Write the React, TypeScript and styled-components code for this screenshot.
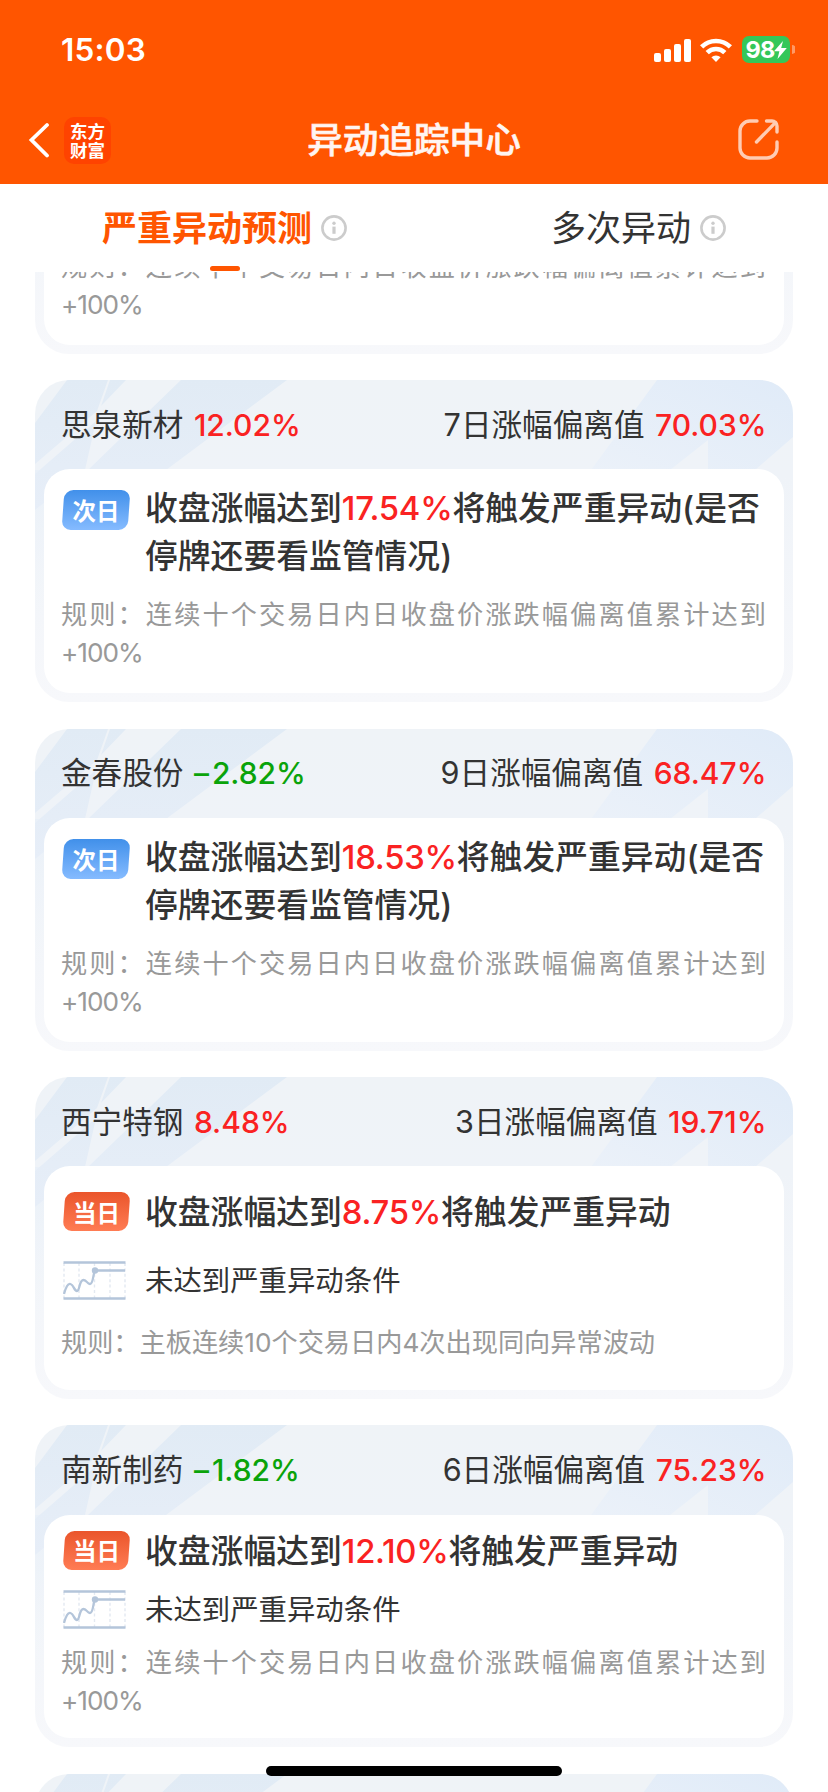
import React from "react";
import styled, { createGlobalStyle } from "styled-components";

const GlobalStyle = createGlobalStyle`
  * { box-sizing: border-box; }
  body { margin: 0; background: #fff; }
`;

const Page = styled.div`
  position: relative;
  width: 828px;
  height: 1792px;
  overflow: hidden;
  display: flex;
  flex-direction: column;
  background: #fff;
  color: #333;
  font-family: Inter, "Noto Sans CJK SC", sans-serif;
`;

const Header = styled.header`
  flex: none;
  height: 184px;
  background: #ff5500;
  color: #fff;
`;

const StatusBar = styled.div`
  height: 96px;
  padding: 3px 33.5px 0 61px;
  display: flex;
  align-items: center;
  justify-content: space-between;
`;

const Clock = styled.span`
  font-size: 31.5px;
  font-weight: 600;
  letter-spacing: 0.2px;
`;

const StatusIcons = styled.div`
  display: flex;
  align-items: center;
  gap: 9.5px;
`;

const Battery = styled.div`
  display: flex;
  align-items: center;
  gap: 2px;
`;

const BatteryBody = styled.div`
  width: 48px;
  height: 27px;
  padding-left: 4px;
  border-radius: 7px;
  background: #34c759;
  display: flex;
  align-items: center;
  font-size: 23.5px;
  font-weight: 700;
  letter-spacing: -0.8px;
`;

const NavBar = styled.div`
  height: 88px;
  padding: 0 28px;
  display: grid;
  grid-template-columns: 1fr auto 1fr;
  align-items: center;
`;

const NavLeft = styled.div`
  display: flex;
  align-items: center;
  gap: 14px;
`;

const Logo = styled.div`
  width: 47px;
  height: 47px;
  border-radius: 10px;
  background: #ff4300;
  display: flex;
  flex-direction: column;
  align-items: center;
  justify-content: center;
  font: 700 17.5px/19.5px "Noto Sans CJK SC", sans-serif;
`;

const NavTitle = styled.h1`
  margin: 2px 0 0;
  font-size: 35.6px;
  line-height: 48px;
  font-weight: 500;
  -webkit-text-stroke: 0.6px #fff5f2;
  color: #fff5f2;
`;

const NavRight = styled.div`
  padding-right: 20px;
  display: flex;
  justify-content: flex-end;
`;

const Tabs = styled.nav`
  flex: none;
  height: 88px;
  display: grid;
  grid-template-columns: 1fr 1fr;
  background: #fff;
`;

const Tab = styled.div<{ $active?: boolean }>`
  position: relative;
  padding-left: 35px;
  display: flex;
  align-items: center;
  justify-content: center;
  gap: 9px;
  font-size: 35px;
  font-weight: ${(p) => (p.$active ? 700 : 400)};
  color: ${(p) => (p.$active ? "#ff5500" : "#333")};
`;

const TabLabel = styled.span`
  line-height: 48px;
`;

const TabLine = styled.i`
  position: absolute;
  left: 209.5px;
  bottom: 1px;
  width: 30px;
  height: 5px;
  border-radius: 3px;
  background: #ff5500;
`;

const List = styled.main`
  flex: 1;
  min-height: 0;
  overflow: hidden;
  padding: 0 35px;
`;

const Track = styled.div`
  margin-top: -240.2px;
  display: flex;
  flex-direction: column;
  gap: 26.4px;
`;

const CardBox = styled.section`
  position: relative;
  flex: none;
  height: 322px;
  padding: 0 9px 9px;
  border-radius: 34px;
  overflow: hidden;
  display: flex;
  flex-direction: column;
`;

const CardArt = styled.svg`
  position: absolute;
  inset: 0;
`;

const CardHead = styled.div`
  position: relative;
  flex: none;
  height: 89.2px;
  padding: 0 17.5px 0 17px;
  display: flex;
  align-items: center;
  justify-content: space-between;
  font-size: 30.6px;
  line-height: 44px;
`;

const HeadGroup = styled.div`
  display: flex;
  align-items: center;
  gap: 10.5px;
`;

const Percent = styled.span<{ $down?: boolean }>`
  display: flex;
  gap: 3px;
  font-weight: 500;
  font-size: 30px;
  letter-spacing: 0;
  color: ${(p) => (p.$down ? "#0aa30a" : "#fa2222")};
`;

const Body = styled.div<{ $pad: number; $gap: number }>`
  position: relative;
  flex: 1;
  padding: ${(p) => p.$pad}px 17px 0;
  border-radius: 26px;
  background: #fff;
  display: flex;
  flex-direction: column;
  gap: ${(p) => p.$gap}px;
`;

const Row = styled.div`
  display: grid;
  grid-template-columns: 84px 1fr;
  align-items: start;
`;

const HeadlineSpace = styled.div`
  height: 96px;
`;

const BadgeBox = styled.div<{ $today: boolean }>`
  position: relative;
  width: ${(p) => (p.$today ? 65 : 66)}px;
  height: ${(p) => (p.$today ? 39 : 40)}px;
  margin: ${(p) => (p.$today ? "4px 0 0 3px" : "6px 0 0 2px")};
  display: flex;
  align-items: center;
  justify-content: center;
  font: 700 23.5px/36px "Noto Sans CJK SC", sans-serif;
  color: #fff;
  &::before {
    content: "";
    position: absolute;
    inset: 0;
    border-radius: 9px;
    transform: skewX(-4deg);
    background: ${(p) =>
      p.$today
        ? "linear-gradient(#ea552b, #ff7c54)"
        : "linear-gradient(#4190ea, #85bbff)"};
  }
  span { position: relative; }
`;

const Headline = styled.div`
  font-size: 32.8px;
  line-height: 48px;
  font-weight: 500;
  white-space: nowrap;
`;

const Value = styled.span`
  color: #fa2222;
  letter-spacing: -0.25px;
`;

const Condition = styled.div`
  margin-top: 1px;
  font-size: 28.4px;
  line-height: 40px;
`;

const ChartIcon = styled.svg`
  margin: 1px 0 0 1.5px;
`;

const Rule = styled.p`
  margin: 0;
  width: 705px;
  font-size: 26.2px;
  line-height: 38px;
  color: #999;
  text-align: justify;
`;

const Threshold = styled.span`
  letter-spacing: -1px;
`;

const HomeIndicator = styled.div`
  position: absolute;
  left: 266px;
  bottom: 16px;
  width: 296px;
  height: 10px;
  border-radius: 5px;
  background: #000;
`;

const InfoIcon = () => (
  <svg width="26" height="26" viewBox="0 0 26 26">
    <circle cx="13" cy="13" r="11.6" fill="none" stroke="#ccc" strokeWidth="2.6" />
    <circle cx="13" cy="8.3" r="1.7" fill="#ccc" />
    <path d="M13 11.6v7.2" stroke="#ccc" strokeWidth="3.2" />
  </svg>
);

const SignalIcon = () => (
  <svg width="37" height="24" viewBox="0 0 37 24" fill="#fff">
    <rect x="0" y="15" width="7" height="9" rx="2" />
    <rect x="10" y="11" width="7" height="13" rx="2" />
    <rect x="20" y="6" width="7" height="18" rx="2" />
    <rect x="30" y="1" width="7" height="23" rx="2" />
  </svg>
);

const WifiIcon = () => (
  <svg width="32" height="24" viewBox="0 0 32 24" fill="none" stroke="#fff" strokeWidth="4.6">
    <path d="M1.6 8.9a20.4 20.4 0 0 1 28.8 0" />
    <path d="M7.2 14.6a12.4 12.4 0 0 1 17.6 0" />
    <path d="M16 24l-4.6-4.7a6.5 6.5 0 0 1 9.2 0z" fill="#fff" stroke="none" />
  </svg>
);

const ShareIcon = () => (
  <svg width="42" height="42" viewBox="0 0 42 42" fill="none" stroke="#ffccb3" strokeWidth="3.4" strokeLinecap="round" strokeLinejoin="round">
    <path d="M19 2H12A10 10 0 0 0 2 12v17a10 10 0 0 0 10 10h17a10 10 0 0 0 10-10V23" />
    <path d="M28.5 2H34a5 5 0 0 1 5 5v6M37.6 3.4L18.5 23" />
  </svg>
);

const Badge = ({ today }: { today?: boolean }) => (
  <BadgeBox $today={!!today}>
    <span>{today ? "当日" : "次日"}</span>
  </BadgeBox>
);

const TrendChart = () => (
  <ChartIcon width="63" height="39" viewBox="0 0 63 39" fill="none">
    <path d="M1 2v36M16 2v36M31.5 2v36M47 2v36M62 2v36" stroke="#e3e9f1" strokeWidth="1.4" strokeDasharray="3 2.4" />
    <path d="M.5 1.5h62M.5 37.5h62" stroke="#b4c5da" strokeWidth="2.4" />
    <path d="M1 33C3 26 5 22 7.5 23C11 24 11 30 14 30C17 30 16 19 20.5 19C24 19 24 23 27 23C30.5 23 30 12 32 9.5H62" stroke="#b4c5da" strokeWidth="2.3" />
    <circle cx="32" cy="9.5" r="3.2" fill="#b4c5da" />
  </ChartIcon>
);

const HeaderArt = () => (
  <CardArt width="758" height="322" viewBox="0 0 758 322">
    <defs>
      <linearGradient id="cardBase" x1="0" y1="0" x2="0" y2="1">
        <stop offset="0" stopColor="#eff3f7" />
        <stop offset=".3" stopColor="#eff3f8" />
        <stop offset="1" stopColor="#f7f8fb" />
      </linearGradient>
      <linearGradient id="cardStreak" x1="0" y1="0" x2="0" y2="1">
        <stop offset="0" stopColor="#e1ebf5" />
        <stop offset="1" stopColor="#e7eef8" />
      </linearGradient>
      <linearGradient id="cardCorner" x1="0" y1="1" x2="1" y2="0">
        <stop offset="0" stopColor="#ebf1f9" />
        <stop offset="1" stopColor="#e0ebf8" />
      </linearGradient>
      <linearGradient id="cardEdge" x1="0" y1="0" x2="0" y2="1">
        <stop offset="0" stopColor="#e9f0f8" />
        <stop offset="1" stopColor="#f4f7fb" stopOpacity="0" />
      </linearGradient>
    </defs>
    <rect width="758" height="322" fill="url(#cardBase)" />
    <rect y="90" width="30" height="170" fill="url(#cardEdge)" />
    <path d="M32 0H73L62 31L0 84V43z M75 0H91L66 26z M61 41L50 90L0 130V94z M146 0H252L131 90H53z" fill="url(#cardStreak)" />
    <path d="M622 0H758V57L720 90H673V60L635 90H556z" fill="url(#cardCorner)" />
  </CardArt>
);

type Quote = {
  name: string;
  change: string;
  days: number;
  deviation: string;
  target: string;
};

type Item = {
  quote?: Quote;
  today?: boolean;
  rule?: string;
  threshold?: string;
  pad: number;
  gap: number;
};

const TEN_DAYS = "规则：连续十个交易日内日收盘价涨跌幅偏离值累计达到";

const items: Item[] = [
  { rule: TEN_DAYS, threshold: "+100%", pad: 15, gap: 15.6 },
  {
    quote: { name: "思泉新材", change: "12.02%", days: 7, deviation: "70.03%", target: "17.54%" },
    rule: TEN_DAYS, threshold: "+100%", pad: 15, gap: 15.5,
  },
  {
    quote: { name: "金春股份", change: "–2.82%", days: 9, deviation: "68.47%", target: "18.53%" },
    rule: TEN_DAYS, threshold: "+100%", pad: 15, gap: 16,
  },
  {
    quote: { name: "西宁特钢", change: "8.48%", days: 3, deviation: "19.71%", target: "8.75%" },
    today: true, rule: "规则：主板连续10个交易日内4次出现同向异常波动", pad: 22, gap: 23.4,
  },
  {
    quote: { name: "南新制药", change: "–1.82%", days: 6, deviation: "75.23%", target: "12.10%" },
    today: true, rule: TEN_DAYS, threshold: "+100%", pad: 12.4, gap: 14,
  },
  { pad: 12, gap: 14.4 },
];

const Change = ({ value }: { value: string }) => {
  const down = value.startsWith("–");
  return (
    <Percent $down={down}>
      {down && <span>–</span>}
      <span>{down ? value.slice(1) : value}</span>
    </Percent>
  );
};

const Card = ({ item: { quote, today, rule, threshold, pad, gap } }: { item: Item }) => (
  <CardBox>
    <HeaderArt />
    <CardHead>
      {quote && (
        <>
          <HeadGroup>
            <span>{quote.name}</span>
            <Change value={quote.change} />
          </HeadGroup>
          <HeadGroup>
            <span>{quote.days}日涨幅偏离值</span>
            <Change value={quote.deviation} />
          </HeadGroup>
        </>
      )}
    </CardHead>
    <Body $pad={pad} $gap={gap}>
      {quote ? (
        <Row>
          <Badge today={today} />
          <Headline>
            收盘涨幅达到<Value>{quote.target}</Value>将触发严重异动
            {!today && (
              <>
                (是否
                <br />
                停牌还要看监管情况)
              </>
            )}
          </Headline>
        </Row>
      ) : (
        <HeadlineSpace />
      )}
      {today && (
        <Row>
          <TrendChart />
          <Condition>未达到严重异动条件</Condition>
        </Row>
      )}
      {rule && (
        <Rule>
          {rule}
          {threshold && <Threshold>{threshold}</Threshold>}
        </Rule>
      )}
    </Body>
  </CardBox>
);

export default function App() {
  return (
    <Page>
      <GlobalStyle />
      <Header>
        <StatusBar>
          <Clock>15:03</Clock>
          <StatusIcons>
            <SignalIcon />
            <WifiIcon />
            <Battery>
              <BatteryBody>
                98
                <svg width="13" height="18" viewBox="0 0 13 18" fill="#fff">
                  <path d="M9 0L0 10.3h5.4L3.5 18L12.8 7H7.2z" />
                </svg>
              </BatteryBody>
              <svg width="3" height="9" viewBox="0 0 3 9">
                <path d="M0 0a4.5 4.5 0 0 1 0 9z" fill="#ff9966" />
              </svg>
            </Battery>
          </StatusIcons>
        </StatusBar>
        <NavBar>
          <NavLeft>
            <svg width="22" height="36" viewBox="0 0 22 36" fill="none" stroke="#fff" strokeWidth="3.8" strokeLinecap="round">
              <path d="M19 3L3.5 18L19 33.5" />
            </svg>
            <Logo>
              <span>东方</span>
              <span>财富</span>
            </Logo>
          </NavLeft>
          <NavTitle>异动追踪中心</NavTitle>
          <NavRight>
            <ShareIcon />
          </NavRight>
        </NavBar>
      </Header>
      <Tabs>
        <Tab $active>
          <TabLabel>严重异动预测</TabLabel>
          <InfoIcon />
          <TabLine />
        </Tab>
        <Tab>
          <TabLabel>多次异动</TabLabel>
          <InfoIcon />
        </Tab>
      </Tabs>
      <List>
        <Track>
          {items.map((item, i) => (
            <Card key={i} item={item} />
          ))}
        </Track>
      </List>
      <HomeIndicator />
    </Page>
  );
}
